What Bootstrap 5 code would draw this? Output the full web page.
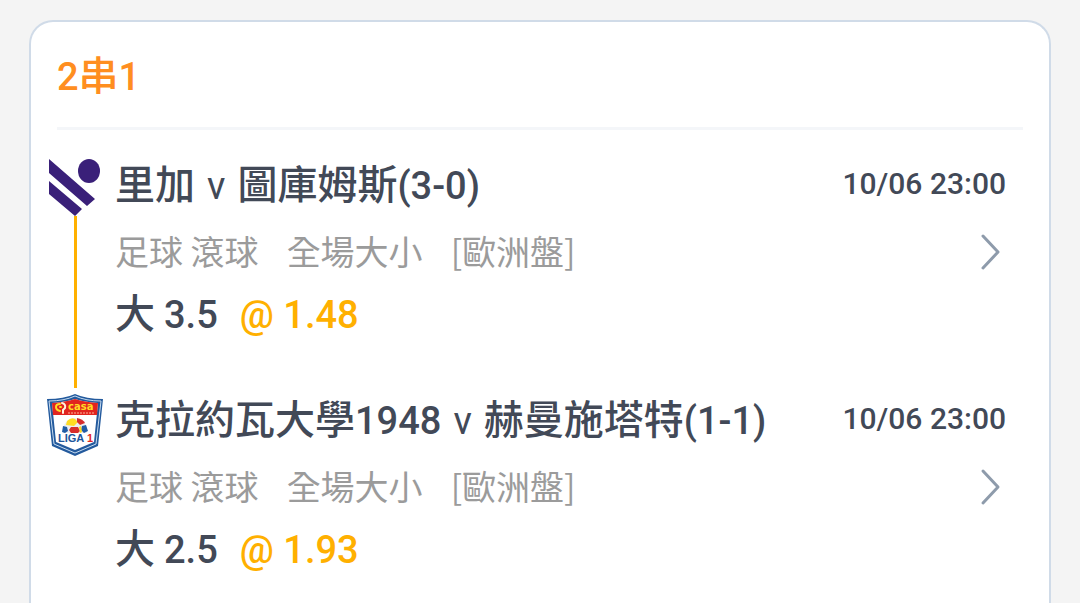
<!DOCTYPE html>
<html lang="zh-Hant">
<head>
<meta charset="utf-8">
<meta name="viewport" content="width=device-width, initial-scale=1">
<title>2串1</title>
<link rel="stylesheet" href="https://cdn.jsdelivr.net/npm/bootstrap@5.3.0/dist/css/bootstrap.min.css">
<style>
body { background: #f4f4f4; color: #424957; font-family: "Noto Sans CJK TC", sans-serif; font-weight: 500; }
.latin { font-family: Roboto, "Noto Sans CJK TC", sans-serif; line-height: 1; }
.page { padding: 20px 29px 0; }
.slip { border: 2px solid #d0dbe8; border-bottom: 0; border-radius: 24px 24px 0 0; }
.slip-head { margin: 0 26px; padding-top: 24px; padding-bottom: 27px; border-bottom: 3px solid #f4f6f9; }
.slip-title { color: #ff8e20; font-size: 40px; line-height: 54px; font-weight: 500; }
.slip-title .latin { font-size: 38px; }
.legs { padding: 28px 43px 0 16px; }
.leg { gap: 12px; }
.leg:not(:last-child) .leg-body { padding-bottom: 59px; }
.crest { width: 56px; }
.rail { width: 3px; background: #ffb000; margin-bottom: 5px; }
.teams { font-size: 40px; line-height: 48px; font-weight: 500; }
.teams .latin, .pick .latin { font-size: 38px; }
.teams .versus { font-weight: 400; margin: 0 12px; }
.kickoff { font-size: 30px; line-height: 52px; }
.market { color: #9b9b9b; font-size: 34px; line-height: 48px; font-weight: 400; gap: 28px; margin: 17px 0 15px; }
.pick { font-size: 40px; line-height: 42px; gap: 22px; }
.odds { color: #ffb000; }
.more { margin-top: 4px; margin-right: 4px; }
</style>
</head>
<body>
<main class="page min-vh-100 d-flex flex-column">
  <section class="slip bg-white flex-grow-1">
    <header class="slip-head">
      <h1 class="slip-title m-0"><span class="latin">2</span>串<span class="latin">1</span></h1>
    </header>
    <div class="legs">
      <article class="leg d-flex">
        <div class="crest d-flex flex-column align-items-center flex-shrink-0">
          <svg width="56" height="58" viewBox="0 0 56 58" aria-hidden="true">
            <g fill="#3a2079"><ellipse cx="42" cy="13" rx="11" ry="12"/><path d="M2 1 48 41 40 48 2 15zM2 23 35 51 28 58 2 36z"/></g>
          </svg>
          <div class="rail flex-grow-1"></div>
        </div>
        <div class="leg-body flex-grow-1">
          <div class="d-flex justify-content-between">
            <h2 class="teams m-0">里加<span class="latin versus">v</span>圖庫姆斯<span class="latin">(3-0)</span></h2>
            <time class="kickoff latin text-nowrap">10/06 23:00</time>
          </div>
          <div class="d-flex justify-content-between align-items-center">
            <div class="market d-flex"><span>足球 滾球</span><span>全場大小</span><span>[歐洲盤]</span></div>
            <button type="button" class="more btn p-0 border-0" aria-label="詳情">
              <svg class="d-block" width="22" height="38" viewBox="0 0 22 38" fill="none" stroke="#8e9bab" stroke-width="3" stroke-linecap="round" stroke-linejoin="round"><path d="M3 3 18 19 3 35"/></svg>
            </button>
          </div>
          <div class="pick d-flex align-items-baseline"><span>大 <span class="latin">3.5</span></span><span class="odds latin">@ 1.48</span></div>
        </div>
      </article>
      <article class="leg d-flex">
        <div class="crest d-flex flex-column align-items-center flex-shrink-0">
          <svg width="58" height="64" viewBox="0 0 58 64" aria-hidden="true">
            <path d="M1 6Q18 6 29 1 40 6 57 6L52 53 29 63 6 53Z" fill="#235a9d"/>
            <path d="M3 8Q18 8 29 3 40 8 55 8L50 51 29 60 8 51Z" fill="none" stroke="#c7dbef" stroke-width="1"/>
            <path d="M6 10Q19 9 29 6 39 9 52 10L48 49 29 57 10 49Z" fill="#fff"/>
            <path d="M6 10Q19 9 29 6 39 9 52 10L51 22H7Z" fill="#e1251f"/>
            <g fill="none" stroke-width="2" stroke-linecap="round"><path d="M14 18Q10 17 10 14 10 11 14 11M14 14h1" stroke="#ffdd25"/><path d="M16 10Q20 11 19 15L17 17V20" stroke="#fff3df"/></g>
            <text x="22" y="17" fill="#ffdd25" font-family="DejaVu Sans, sans-serif" font-size="10" font-weight="700">casa</text>
            <path d="M22 20H48" stroke="#ffb39a" stroke-width="1" stroke-dasharray="2 1"/>
            <path d="M17 40Q16 27 29 25 42 27 41 40Z" fill="#eceef2"/>
            <path d="M21 28Q25 24 29 26L32 29 28 33 20 32Z" fill="#ffdc23"/><path d="M31 25Q37 26 39 30L34 32 31 29Z" fill="#d72d2c"/>
            <path d="M17 33 21 34 22 38 19 40 16 39ZM36 33 40 32 42 38 38 40 35 37Z" fill="#215da5"/>
            <path d="M25 34H32L34 38 32 40H25L23 37Z" fill="#d72d2c"/><path d="M33 34 35 33 36 39 34 40Z" fill="#ffdc23"/>
            <text x="12" y="49" fill="#20559b" font-family="Liberation Sans, sans-serif" font-size="11" font-weight="700">LIGA <tspan fill="#e1251f">1</tspan></text>
          </svg>
        </div>
        <div class="leg-body flex-grow-1">
          <div class="d-flex justify-content-between">
            <h2 class="teams m-0">克拉約瓦大學<span class="latin">1948</span><span class="latin versus">v</span>赫曼施塔特<span class="latin">(1-1)</span></h2>
            <time class="kickoff latin text-nowrap">10/06 23:00</time>
          </div>
          <div class="d-flex justify-content-between align-items-center">
            <div class="market d-flex"><span>足球 滾球</span><span>全場大小</span><span>[歐洲盤]</span></div>
            <button type="button" class="more btn p-0 border-0" aria-label="詳情">
              <svg class="d-block" width="22" height="38" viewBox="0 0 22 38" fill="none" stroke="#8e9bab" stroke-width="3" stroke-linecap="round" stroke-linejoin="round"><path d="M3 3 18 19 3 35"/></svg>
            </button>
          </div>
          <div class="pick d-flex align-items-baseline"><span>大 <span class="latin">2.5</span></span><span class="odds latin">@ 1.93</span></div>
        </div>
      </article>
    </div>
  </section>
</main>
<script src="https://cdn.jsdelivr.net/npm/bootstrap@5.3.0/dist/js/bootstrap.bundle.min.js"></script>
</body>
</html>
